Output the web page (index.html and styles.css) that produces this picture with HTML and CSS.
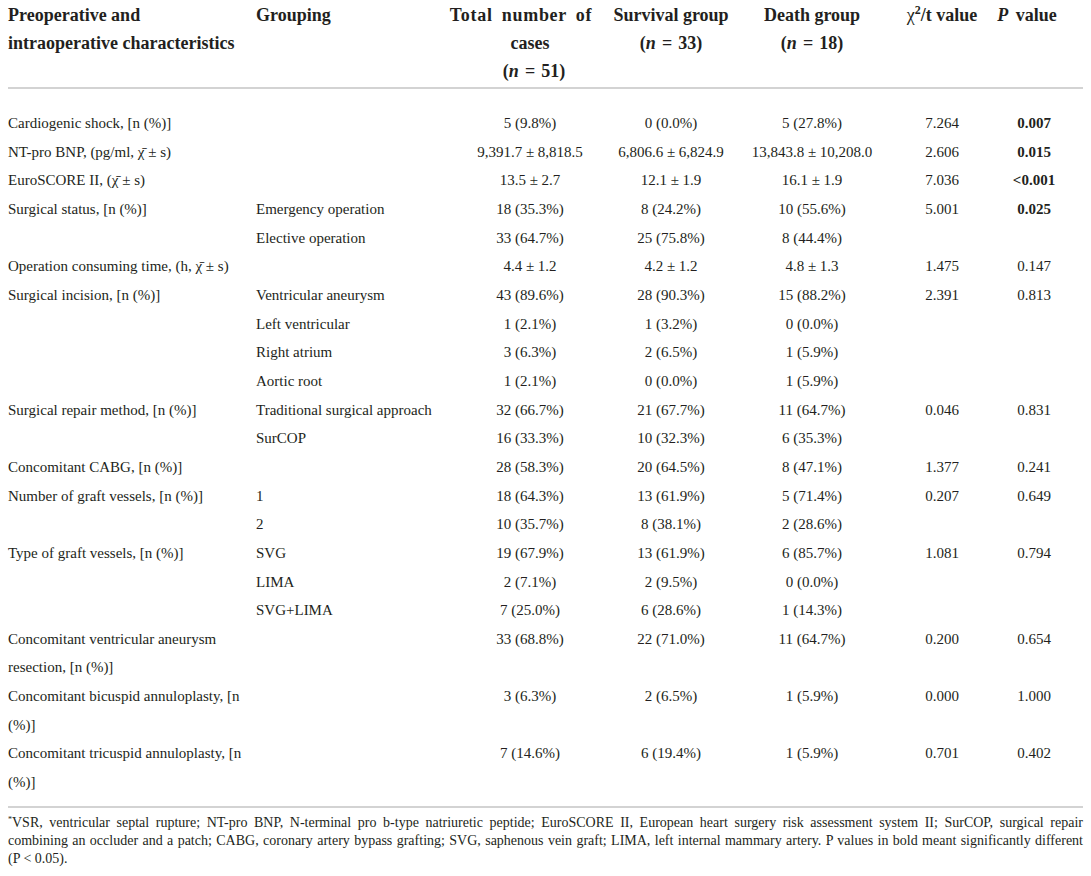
FILE: index.html
```html
<!DOCTYPE html>
<html lang="en">
<head>
<meta charset="utf-8">
<title>Table</title>
<link rel="stylesheet" href="styles.css">
</head>
<body>
<div class="page">
<table class="data">
<colgroup>
<col class="c1"><col class="c2"><col class="c3"><col class="c4"><col class="c5"><col class="c6"><col class="c7">
</colgroup>
<thead>
<tr>
<th class="left">Preoperative and<br>intraoperative characteristics</th>
<th class="left">Grouping</th>
<th><div class="hw"><span class="jl">Total number of</span><span class="hl">cases</span><span class="hl sh">(<i>n</i><span class="eq">=</span>51)</span></div></th>
<th><div class="hw">Survival group<br>(<i>n</i><span class="eq">=</span>33)</div></th>
<th><div class="hw">Death group<br>(<i>n</i><span class="eq">=</span>18)</div></th>
<th><div class="hw"><span class="chi">χ</span><sup>2</sup>/t value</div></th>
<th><div class="hw pv"><i>P</i> value</div></th>
</tr>
</thead>
<tbody>
<tr class="first"><td>Cardiogenic shock, [n (%)]</td><td></td><td>5 (9.8%)</td><td>0 (0.0%)</td><td>5 (27.8%)</td><td>7.264</td><td class="b">0.007</td></tr>
<tr><td>NT-pro BNP, (pg/ml, χ̄ ± s)</td><td></td><td>9,391.7 ± 8,818.5</td><td>6,806.6 ± 6,824.9</td><td>13,843.8 ± 10,208.0</td><td>2.606</td><td class="b">0.015</td></tr>
<tr><td>EuroSCORE II, (χ̄ ± s)</td><td></td><td>13.5 ± 2.7</td><td>12.1 ± 1.9</td><td>16.1 ± 1.9</td><td>7.036</td><td class="b">&lt;0.001</td></tr>
<tr><td>Surgical status, [n (%)]</td><td>Emergency operation</td><td>18 (35.3%)</td><td>8 (24.2%)</td><td>10 (55.6%)</td><td>5.001</td><td class="b">0.025</td></tr>
<tr><td></td><td>Elective operation</td><td>33 (64.7%)</td><td>25 (75.8%)</td><td>8 (44.4%)</td><td></td><td></td></tr>
<tr><td>Operation consuming time, (h, χ̄ ± s)</td><td></td><td>4.4 ± 1.2</td><td>4.2 ± 1.2</td><td>4.8 ± 1.3</td><td>1.475</td><td>0.147</td></tr>
<tr><td>Surgical incision, [n (%)]</td><td>Ventricular aneurysm</td><td>43 (89.6%)</td><td>28 (90.3%)</td><td>15 (88.2%)</td><td>2.391</td><td>0.813</td></tr>
<tr><td></td><td>Left ventricular</td><td>1 (2.1%)</td><td>1 (3.2%)</td><td>0 (0.0%)</td><td></td><td></td></tr>
<tr><td></td><td>Right atrium</td><td>3 (6.3%)</td><td>2 (6.5%)</td><td>1 (5.9%)</td><td></td><td></td></tr>
<tr><td></td><td>Aortic root</td><td>1 (2.1%)</td><td>0 (0.0%)</td><td>1 (5.9%)</td><td></td><td></td></tr>
<tr><td>Surgical repair method, [n (%)]</td><td>Traditional surgical approach</td><td>32 (66.7%)</td><td>21 (67.7%)</td><td>11 (64.7%)</td><td>0.046</td><td>0.831</td></tr>
<tr><td></td><td>SurCOP</td><td>16 (33.3%)</td><td>10 (32.3%)</td><td>6 (35.3%)</td><td></td><td></td></tr>
<tr><td>Concomitant CABG, [n (%)]</td><td></td><td>28 (58.3%)</td><td>20 (64.5%)</td><td>8 (47.1%)</td><td>1.377</td><td>0.241</td></tr>
<tr><td>Number of graft vessels, [n (%)]</td><td>1</td><td>18 (64.3%)</td><td>13 (61.9%)</td><td>5 (71.4%)</td><td>0.207</td><td>0.649</td></tr>
<tr><td></td><td>2</td><td>10 (35.7%)</td><td>8 (38.1%)</td><td>2 (28.6%)</td><td></td><td></td></tr>
<tr><td>Type of graft vessels, [n (%)]</td><td>SVG</td><td>19 (67.9%)</td><td>13 (61.9%)</td><td>6 (85.7%)</td><td>1.081</td><td>0.794</td></tr>
<tr><td></td><td>LIMA</td><td>2 (7.1%)</td><td>2 (9.5%)</td><td>0 (0.0%)</td><td></td><td></td></tr>
<tr><td></td><td>SVG+LIMA</td><td>7 (25.0%)</td><td>6 (28.6%)</td><td>1 (14.3%)</td><td></td><td></td></tr>
<tr><td>Concomitant ventricular aneurysm<br>resection, [n (%)]</td><td></td><td>33 (68.8%)</td><td>22 (71.0%)</td><td>11 (64.7%)</td><td>0.200</td><td>0.654</td></tr>
<tr><td>Concomitant bicuspid annuloplasty, [n<br>(%)]</td><td></td><td>3 (6.3%)</td><td>2 (6.5%)</td><td>1 (5.9%)</td><td>0.000</td><td>1.000</td></tr>
<tr class="last"><td>Concomitant tricuspid annuloplasty, [n<br>(%)]</td><td></td><td>7 (14.6%)</td><td>6 (19.4%)</td><td>1 (5.9%)</td><td>0.701</td><td>0.402</td></tr>
</tbody>
</table>
<div class="foot">
<span class="fl"><sup class="ast">*</sup>VSR, ventricular septal rupture; NT-pro BNP, N-terminal pro b-type natriuretic peptide; EuroSCORE II, European heart surgery risk assessment system II; SurCOP, surgical repair</span>
<span class="fl">combining an occluder and a patch; CABG, coronary artery bypass grafting; SVG, saphenous vein graft; LIMA, left internal mammary artery. P values in bold meant significantly different</span>
<span class="fe">(P &lt; 0.05).</span>
</div>
</div>
</body>
</html>
```
FILE: styles.css
```css
html, body {
  margin: 0;
  padding: 0;
  background: #ffffff;
}
body {
  font-family: "Liberation Serif", "Times New Roman", serif;
  color: #231f20;
}
.page {
  padding: 0 8px;
}
.data {
  width: 1075px;
  table-layout: fixed;
  border-collapse: collapse;
  border-spacing: 0;
}
.c1 { width: 248px; }
.c2 { width: 204px; }
.c3 { width: 140px; }
.c4 { width: 142px; }
.c5 { width: 140px; }
.c6 { width: 120px; }
.c7 { width: 81px; }

.data th {
  font-size: 18px;
  font-weight: bold;
  line-height: 28px;
  padding: 1px 0 2px 0;
  text-align: center;
  vertical-align: top;
  border-bottom: 2px solid #d3d3d3;
  white-space: nowrap;
}
.data th.left {
  text-align: left;
}
.data th .hw {
  margin: 0 -30px;
  text-align: center;
}
.data th .hw.pv {
  margin: 0 -13px 0 -30px;
  padding-right: 14px;
  word-spacing: 3px;
}
.hl {
  display: block;
}
.jl {
  display: block;
  padding-right: 18px;
  letter-spacing: 0.7px;
  word-spacing: 4px;
}
.sh {
  padding-left: 8px;
}
.eq {
  padding: 0 6px;
}
.data th sup {
  font-size: 12px;
  line-height: 0;
  vertical-align: 7px;
}
.chi {
  font-weight: normal;
}
.data td {
  font-size: 15px;
  line-height: 28.65px;
  padding: 0;
  text-align: center;
  vertical-align: top;
  white-space: nowrap;
}
.data td:first-child,
.data td:nth-child(2) {
  text-align: left;
}
.data td:nth-child(7) {
  padding-right: 17px;
}
.data td.b {
  font-weight: bold;
}
.data tr.first td {
  padding-top: 20px;
}
.data tr.last td {
  padding-bottom: 9px;
  border-bottom: 2px solid #d3d3d3;
}
.data tr.last td:nth-child(7) {
  padding-right: 17px;
}
.foot {
  width: 1075px;
  font-size: 14px;
  line-height: 18px;
  padding-top: 6px;
}
.fl {
  display: block;
  text-align: justify;
  text-align-last: justify;
}
.fe {
  display: block;
  text-align: left;
}
.ast {
  font-size: 8px;
  line-height: 0;
  vertical-align: 5px;
}
```
